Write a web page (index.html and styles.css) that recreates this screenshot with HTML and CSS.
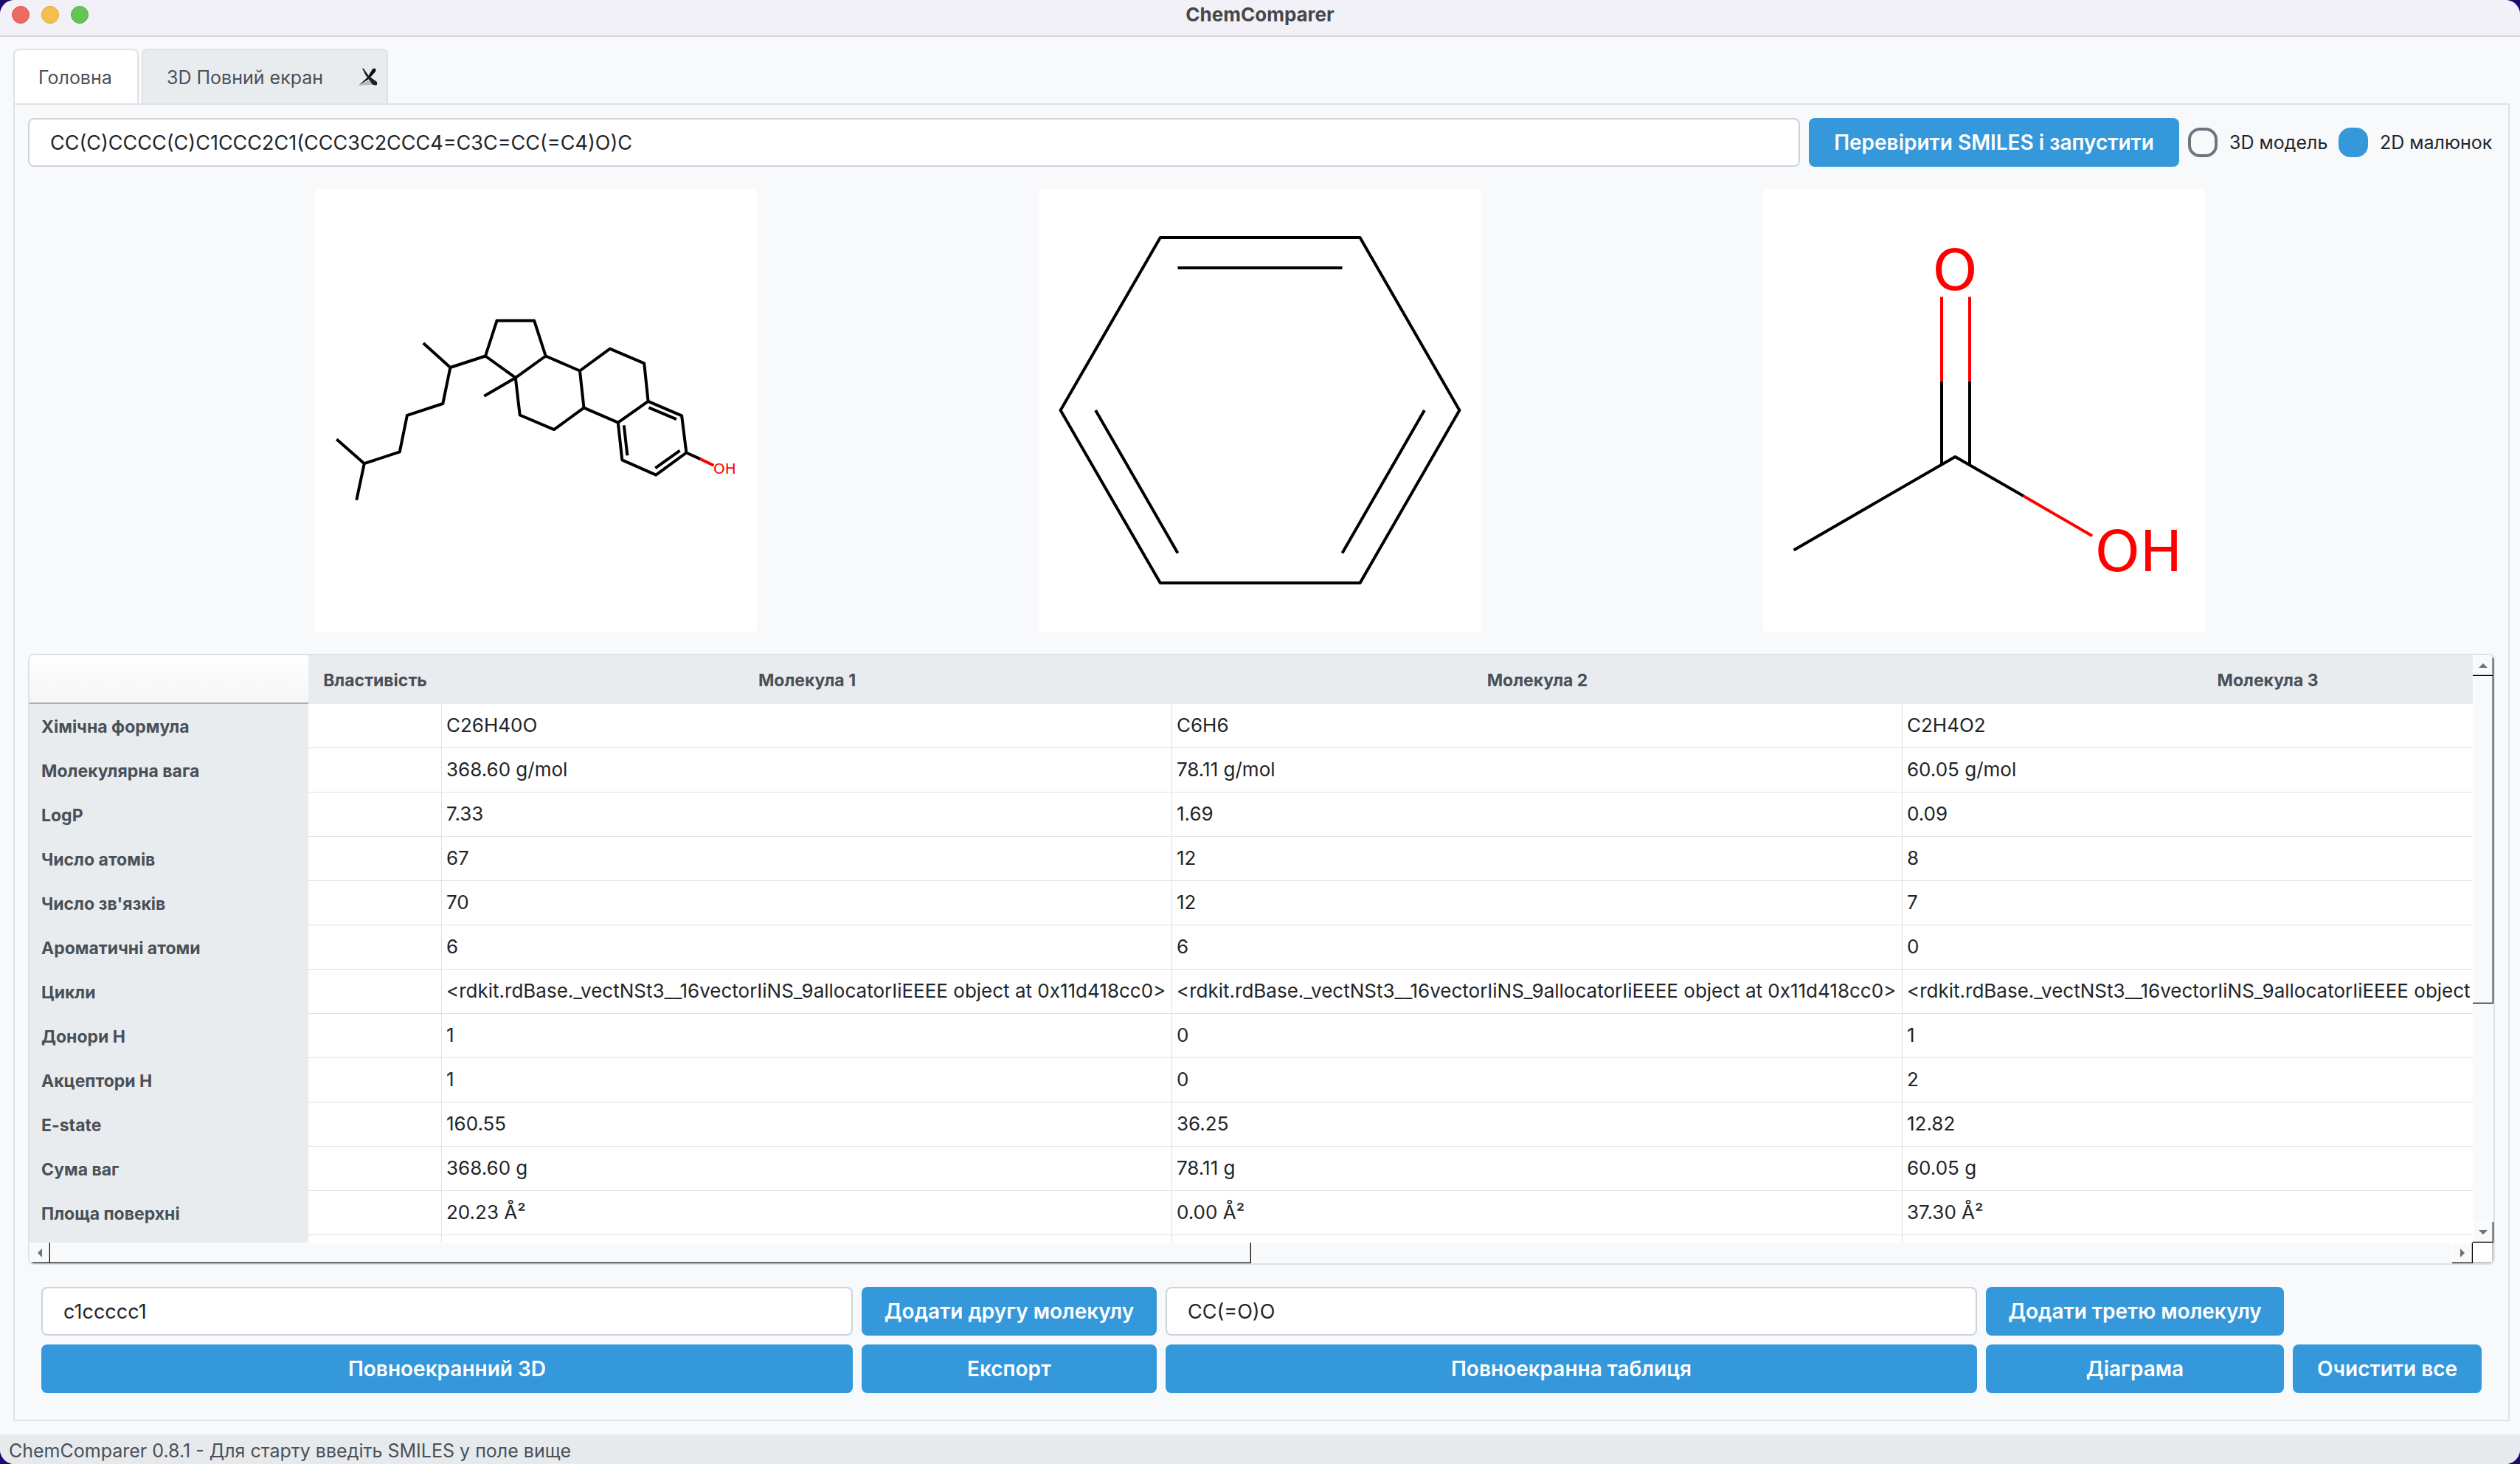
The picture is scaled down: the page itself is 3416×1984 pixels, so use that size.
FILE: index.html
```html
<!DOCTYPE html>
<html lang="uk">
<head>
<meta charset="utf-8">
<title>ChemComparer</title>
<link rel="stylesheet" href="styles.css">
</head>
<body>
<div class="window">
  <header class="titlebar">
    <div class="lights">
      <button class="light light-close" aria-label="Закрити"></button>
      <button class="light light-min" aria-label="Згорнути"></button>
      <button class="light light-max" aria-label="Розгорнути"></button>
    </div>
    <h1 class="title">ChemComparer</h1>
  </header>

  <main class="content">
    <nav class="tabs">
      <div class="tab tab-active"><button class="tab-label">Головна</button></div>
      <div class="tab tab-closable">
        <button class="tab-label">3D Повний екран</button>
        <button class="tab-close" aria-label="Закрити вкладку">
          <svg width="28" height="28" viewBox="0 0 28 28">
            <path d="M1 25L22 23.500L13 18Z" fill="#b9bcbf"/>
            <path d="M0 25L12 14L19 2.500Q22 1 23.500 2.500L23 6L14 16Z" fill="#0a0a0a"/>
            <path d="M5 1.500L7 2L14 12L25 20V24Q20 26 17 21L9 10Z" fill="#222"/>
          </svg>
        </button>
      </div>
    </nav>

    <section class="pane">
      <form class="query">
        <input class="field" type="text" aria-label="SMILES" value="CC(C)CCCC(C)C1CCC2C1(CCC3C2CCC4=C3C=CC(=C4)O)C">
        <button class="btn btn-run" type="button">Перевірити SMILES і запустити</button>
        <label class="choice choice-3d"><input type="radio" name="view">3D модель</label>
        <label class="choice choice-2d"><input type="radio" name="view" checked>2D малюнок</label>
      </form>

      <div class="drawings">
        <svg class="molecule" viewBox="0 0 600 600">
          <g class="bond">
            <path d="M147.800 209L184.400 242L232 226.500L247.600 178.400H298.100L313.700 226.500L272.800 255.900L232 226.500"/>
            <path d="M272.800 255.900L230.300 280.800M272.800 255.900L278.700 306.500L325 326.100L365.500 296.700L360 246.500L313.700 226.500"/>
            <path d="M360 246.500L400.800 216.700L447.200 236.300L452.600 287.800L411.800 316.700L365.500 296.700"/>
            <path d="M452.600 287.800L498.100 307.300L504.400 357.500L463.200 387.700L417.300 367.300L411.800 316.700"/>
            <path d="M453.500 296.300L490.900 312.200M419.800 320.400L424.400 361.200M462.300 378.400L495.600 354.700M504.400 357.500L523.400 366.100"/>
            <path d="M184.400 242L174.300 291L125.900 306.900L115.800 356.300L67.800 372.200L30.300 339.200M67.800 372.200L57.300 421.600"/>
          </g>
          <path class="bond bond-o" d="M523.400 366.100L541.500 374.700"/>
          <text class="atom atom-small" x="541" y="386">OH</text>
        </svg>
        <svg class="molecule" viewBox="0 0 600 600">
          <g class="bond">
            <path d="M164.800 66H435.600L570.400 300L435.600 534H164.800L29.600 300Z"/>
            <path d="M188.500 107H411.500M77.100 300L188.500 493.500M522.900 300L411.500 493.500"/>
          </g>
        </svg>
        <svg class="molecule" viewBox="0 0 600 600">
          <path class="bond" d="M41.600 489.500L260.400 362.900L353.100 416.300M242 260.800V373.700M280 260.800V373.700"/>
          <path class="bond bond-o" d="M242 146.300V260.800M280 146.300V260.800M353.100 416.300L446.100 470.200"/>
          <text class="atom" x="260" y="137" text-anchor="middle">O</text>
          <text class="atom" x="450" y="518">OH</text>
        </svg>
      </div>

      <div class="grid-box">
        <div class="grid-view">
          <table class="props">
            <colgroup><col class="col-name"><col class="col-prop"><col class="col-mol"><col class="col-mol"><col class="col-mol"></colgroup>
            <thead>
              <tr><td class="corner"></td><th scope="col">Властивість</th><th scope="col">Молекула 1</th><th scope="col">Молекула 2</th><th scope="col">Молекула 3</th></tr>
            </thead>
            <tbody>
              <tr><th scope="row">Хімічна формула</th><td></td><td>C26H40O</td><td>C6H6</td><td>C2H4O2</td></tr>
              <tr><th scope="row">Молекулярна вага</th><td></td><td>368.60 g/mol</td><td>78.11 g/mol</td><td>60.05 g/mol</td></tr>
              <tr><th scope="row">LogP</th><td></td><td>7.33</td><td>1.69</td><td>0.09</td></tr>
              <tr><th scope="row">Число атомів</th><td></td><td>67</td><td>12</td><td>8</td></tr>
              <tr><th scope="row">Число зв'язків</th><td></td><td>70</td><td>12</td><td>7</td></tr>
              <tr><th scope="row">Ароматичні атоми</th><td></td><td>6</td><td>6</td><td>0</td></tr>
              <tr><th scope="row">Цикли</th><td></td><td>&lt;rdkit.rdBase._vectNSt3__16vectorIiNS_9allocatorIiEEEE object at 0x11d418cc0&gt;</td><td>&lt;rdkit.rdBase._vectNSt3__16vectorIiNS_9allocatorIiEEEE object at 0x11d418cc0&gt;</td><td>&lt;rdkit.rdBase._vectNSt3__16vectorIiNS_9allocatorIiEEEE object</td></tr>
              <tr><th scope="row">Донори H</th><td></td><td>1</td><td>0</td><td>1</td></tr>
              <tr><th scope="row">Акцептори H</th><td></td><td>1</td><td>0</td><td>2</td></tr>
              <tr><th scope="row">E-state</th><td></td><td>160.55</td><td>36.25</td><td>12.82</td></tr>
              <tr><th scope="row">Сума ваг</th><td></td><td>368.60 g</td><td>78.11 g</td><td>60.05 g</td></tr>
              <tr><th scope="row">Площа поверхні</th><td></td><td>20.23 Å²</td><td>0.00 Å²</td><td>37.30 Å²</td></tr>
              <tr><th scope="row"></th><td></td><td></td><td></td><td></td></tr>
            </tbody>
          </table>
        </div>
        <div class="bar bar-v">
          <button class="raised step" aria-label="Вгору"><svg width="12" height="6" viewBox="0 0 12 6"><path d="M0 6L6 0L12 6Z"/></svg></button>
          <div class="track"><div class="raised thumb"></div></div>
          <button class="raised step" aria-label="Вниз"><svg width="12" height="6" viewBox="0 0 12 6"><path d="M0 0L6 6L12 0Z"/></svg></button>
        </div>
        <div class="bar bar-h">
          <button class="raised step" aria-label="Ліворуч"><svg width="6" height="12" viewBox="0 0 6 12"><path d="M6 0L0 6L6 12Z"/></svg></button>
          <div class="track"><div class="raised thumb"></div></div>
          <button class="raised step" aria-label="Праворуч"><svg width="6" height="12" viewBox="0 0 6 12"><path d="M0 0L6 6L0 12Z"/></svg></button>
        </div>
        <div class="grip"></div>
      </div>

      <form class="actions">
        <input class="field" type="text" aria-label="Друга молекула" value="c1ccccc1">
        <button class="btn" type="button">Додати другу молекулу</button>
        <input class="field" type="text" aria-label="Третя молекула" value="CC(=O)O">
        <button class="btn" type="button">Додати третю молекулу</button>
        <button class="btn btn-first" type="button">Повноекранний 3D</button>
        <button class="btn" type="button">Експорт</button>
        <button class="btn" type="button">Повноекранна таблиця</button>
        <button class="btn" type="button">Діаграма</button>
        <button class="btn" type="button">Очистити все</button>
      </form>
    </section>
  </main>

  <footer class="status">ChemComparer 0.8.1 - Для старту введіть SMILES у поле вище</footer>
</div>
</body>
</html>
```

FILE: styles.css
```css
* { box-sizing: border-box; }

body {
  margin: 0;
  background: #1c0c6e;
  color: #212529;
  font-family: Inter, "Liberation Sans", sans-serif;
  font-size: 25px;
}

button, input { font: inherit; color: inherit; margin: 0; }

button { border: 0; padding: 0; background: none; }

.window {
  display: flex;
  flex-direction: column;
  height: 100vh;
  overflow: hidden;
  border-radius: 20px;
  background: #f8f9fb;
}

/* Title bar */
.titlebar {
  display: grid;
  grid-template-columns: 1fr auto 1fr;
  align-items: center;
  height: 50px;
  padding: 0 16px 8px;
  border-bottom: 2px solid #d4d4d9;
  background: #f2f1f8;
}

.lights { display: flex; gap: 16px; }

.light { width: 24px; height: 24px; border-radius: 50%; }
.light-close { background: #ed6a5e; border: 1px solid #d8564b; }
.light-min { background: #f5bf4f; border: 1px solid #dba63b; }
.light-max { background: #62c554; border: 1px solid #52ad43; }

.title { margin: 0; font-size: 26px; line-height: 32px; font-weight: 700; color: #464649; }

/* Tabs */
.content {
  display: flex;
  flex-direction: column;
  flex: 1;
  min-height: 0;
  padding: 16px 14px 18px 18px;
}

.tabs { display: flex; gap: 4px; }

.tab {
  display: flex;
  align-items: center;
  min-width: 170px;
  height: 74px;
  padding: 2px 10px 0 32px;
  border: 2px solid #dee2e6;
  border-bottom: 0;
  border-radius: 8px 8px 0 0;
  background: #e9ecef;
  color: #495057;
}

.tab-active { background: #fff; }

.tab-closable { min-width: 334px; }

.tab-label { line-height: 32px; }

.tab-close { width: 28px; height: 28px; margin-left: auto; }

svg { display: block; }

.pane {
  display: flex;
  flex-direction: column;
  flex: 1;
  min-height: 0;
  gap: 30px;
  padding: 18px 18px 36px;
  border: 2px solid #dee2e6;
}

/* Controls */
.field {
  width: 100%;
  min-width: 0;
  height: 66px;
  padding: 0 28px;
  border: 2px solid #ced4da;
  border-radius: 8px;
  background: #fff;
  font-size: 27px;
}

.btn {
  height: 66px;
  border-radius: 8px;
  background: #3498db;
  color: #fff;
  font-size: 28px;
  font-weight: 600;
  white-space: nowrap;
}

.query { display: flex; align-items: center; gap: 12px; }
.query .field { flex: 1; }

.btn-run { width: 502px; }

.choice { display: flex; align-items: center; gap: 16px; white-space: nowrap; }
.choice-3d { width: 192px; }
.choice-2d { width: 212px; }

.choice input {
  appearance: none;
  flex: none;
  width: 40px;
  height: 40px;
  border: 4px solid #6c757d;
  border-radius: 16px;
  background: #f8f9fb;
}

.choice input:checked { border-color: #3498db; background: #3498db; }

/* Structure drawings */
.drawings { display: flex; justify-content: space-evenly; padding: 0 10px 0 6px; }

.molecule { width: 600px; height: 600px; background: #fff; }

.bond { fill: none; stroke: #000; stroke-width: 4; stroke-linejoin: round; }
.bond-o { stroke: #f00; }

.atom { font-family: "DejaVu Sans", sans-serif; font-size: 77px; fill: #f00; }
.atom-small { font-size: 20px; }

/* Property table */
.grid-box {
  display: grid;
  grid-template-columns: minmax(0, 1fr) 28px;
  grid-template-rows: minmax(0, 1fr) 28px;
  flex: 1;
  min-height: 0;
  overflow: hidden;
  border: 2px solid #dee2e6;
  border-radius: 8px;
}

.grid-view { overflow: hidden; background: #fff; }

.props { width: 3529px; table-layout: fixed; border-collapse: separate; border-spacing: 0; }

.col-name { width: 378px; }
.col-prop { width: 181px; }
.col-mol { width: 990px; }

.props th { background: #e9ecef; color: #495057; font-size: 23px; font-weight: 700; }

.props thead th { height: 66px; padding: 2px 0 0; line-height: 28px; }

.props .corner {
  height: 66px;
  border: 0;
  border-bottom: 2px solid #adb0b2;
  background: linear-gradient(#fff, #f4f5f5);
}

.props tbody th { height: 60px; padding: 2px 0 0 16px; text-align: left; }

.props td {
  padding: 0 0 2px 6px;
  border-right: 1px solid #dee2e6;
  border-bottom: 1px solid #dee2e6;
  font-size: 26px;
  line-height: 32px;
  white-space: nowrap;
}

.bar { display: flex; background: #f8f9fa; }
.bar-v { flex-direction: column; }

.step {
  display: flex;
  align-items: center;
  justify-content: center;
  flex: none;
  width: 28px;
  height: 28px;
  fill: #6f7275;
}

.track { flex: 1; }
.bar-v .thumb { height: 60%; }
.bar-h .thumb { width: 50%; height: 28px; }

.raised {
  background: #f8f9fb;
  box-shadow: inset -1px -1px #000, inset -2px -2px #b9bcbe, inset 1px 1px #fff;
}

.grip { border: solid #c4c6c8; border-width: 0 2px 2px 0; background: #fff; }

/* Bottom actions */
.actions {
  display: grid;
  grid-template-columns: 1fr 400px 1fr 404px 256px;
  gap: 12px;
  padding: 0 18px;
}

.btn-first { grid-column: 1; }

.status {
  height: 40px;
  padding: 6px 12px 0;
  background: #e7eaed;
  color: #495057;
  line-height: 32px;
}
```
